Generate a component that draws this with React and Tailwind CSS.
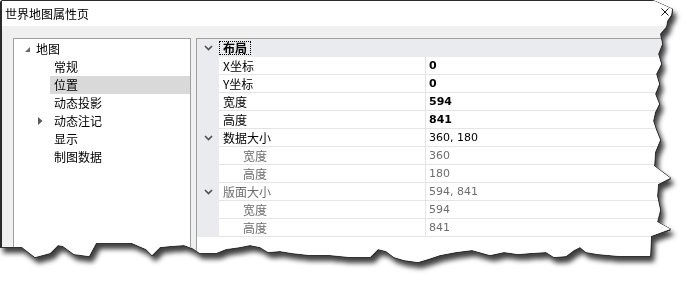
const F = { fontFamily: '"Noto Sans CJK SC", "Noto Sans", sans-serif' };

function Chevron() {
  return (
    <svg width="9" height="6" viewBox="0 0 9 6" className="block">
      <path d="M1 1 L4.5 4.5 L8 1" fill="none" stroke="#505050" strokeWidth="1.6" />
    </svg>
  );
}

function TreeRow({ label, selected, arrow }) {
  return (
    <div className="flex h-[18px]">
      <div className="w-[36px] flex items-center justify-end pr-[7px]">
        {arrow && (
          <svg width="5" height="8" viewBox="0 0 5 8" className="block">
            <path d="M0 0 L4.5 4 L0 8 Z" fill="#5a5a5a" />
          </svg>
        )}
      </div>
      <div className={`flex-1 flex items-center pl-[4px] ${selected ? 'bg-[#d9d9d9]' : ''}`}>
        <span className="text-[12px] leading-none text-black">{label}</span>
      </div>
    </div>
  );
}

function GridRow({ label, value, indent, bold, gray, grayLabel, chevron }) {
  return (
    <div className="flex h-[18px]">
      <div className="w-[22px] shrink-0 bg-[#e9ebef] flex items-center justify-center">
        {chevron && <Chevron />}
      </div>
      <div
        className={`w-[207px] shrink-0 border-b border-r border-[#e4e4e4] flex items-center ${indent ? 'pl-[24px]' : 'pl-[4px]'}`}
      >
        <span className={`text-[12px] leading-none ${grayLabel ? 'text-[#6d6d6d]' : 'text-black'}`}>{label}</span>
      </div>
      <div className="flex-1 border-b border-[#e4e4e4] flex items-center pl-[3px]">
        <span
          className={`text-[11px] leading-none ${bold ? 'font-bold' : ''} ${gray ? 'text-[#6d6d6d]' : 'text-black'}`}
          style={{ fontFamily: '"DejaVu Sans", Verdana, sans-serif' }}
        >
          {value}
        </span>
      </div>
    </div>
  );
}

export default function App() {
  return (
    <div className="w-[697px] h-[285px] bg-white overflow-hidden" style={F}>
      <div className="[filter:drop-shadow(1px_0_0_#333)_drop-shadow(0_1px_0_#333)_drop-shadow(3px_5px_2.5px_rgba(0,0,0,0.75))]">
        <div className="w-[690px] h-[272px] bg-[#f0f0f0] border-l-2 border-t border-[#2b2b2b] rounded-tl-[3px] flex flex-col [clip-path:polygon(0_0,652px_0,672px_9px,671px_15px,667px_21px,666px_27px,660px_34px,662px_44px,658px_54px,661px_64px,656px_74px,659px_84px,655px_94px,659px_104px,655px_112px,653px_121px,656px_130px,660px_140px,655px_152px,654px_166px,670px_178px,658px_184px,657px_196px,660px_210px,657px_222px,670px_229px,651px_236px,650px_256px,620px_256px,598px_254px,586px_252px,580px_247px,574px_250px,566px_256px,554px_257px,546px_252px,530px_253px,518px_254px,504px_252px,490px_255px,472px_250px,456px_252px,440px_255px,428px_259px,418px_262px,404px_260px,394px_257px,386px_251px,378px_249px,370px_257px,350px_257px,330px_255px,310px_255px,292px_253px,280px_251px,268px_252px,260px_247px,250px_245px,240px_247px,226px_249px,216px_253px,200px_253px,192px_248px,184px_245px,170px_246px,160px_247px,152px_255px,146px_249px,132px_243px,110px_243px,96px_243px,89px_256px,74px_254px,63px_246px,58px_245px,50px_253px,35px_257px,22px_247px,8px_247px,0_247px)]">
          <div className="h-[25px] shrink-0 bg-white flex items-center justify-between pl-[3px] pr-[21px]">
            <span className="text-[12px] leading-none text-black">世界地图属性页</span>
            <svg width="8" height="8" viewBox="0 0 8 8" className="block -mt-[3px]">
              <path d="M0.5 0.5 L7.5 7.5 M7.5 0.5 L0.5 7.5" stroke="#111" strokeWidth="1" />
            </svg>
          </div>
          <div className="flex pt-[12px] pl-[11px] gap-[5px] flex-1">
            <div className="w-[178px] h-[230px] shrink-0 bg-white border border-[#a0a0a0] pt-[1px]">
              <div className="flex h-[18px] items-center">
                <div className="w-[22px] flex justify-end pr-[6px]">
                  <svg width="5" height="5" viewBox="0 0 5 5" className="block">
                    <path d="M5 0 L5 5 L0 5 Z" fill="#6a6a6a" />
                  </svg>
                </div>
                <span className="text-[12px] leading-none text-black">地图</span>
              </div>
              <TreeRow label="常规" />
              <TreeRow label="位置" selected />
              <TreeRow label="动态投影" />
              <TreeRow label="动态注记" arrow />
              <TreeRow label="显示" />
              <TreeRow label="制图数据" />
            </div>
            <div className="flex-1 h-[230px] bg-white border-l border-t border-[#a0a0a0]">
              <div className="flex h-[18px] bg-[#e9ebef] items-center">
                <div className="w-[22px] shrink-0 flex items-center justify-center">
                  <Chevron />
                </div>
                <span className="h-[14px] px-[3px] border border-dotted border-black flex items-center text-[12px] leading-none font-bold text-black">
                  布局
                </span>
              </div>
              <GridRow label="X坐标" value="0" bold />
              <GridRow label="Y坐标" value="0" bold />
              <GridRow label="宽度" value="594" bold />
              <GridRow label="高度" value="841" bold />
              <GridRow label="数据大小" value="360, 180" chevron />
              <GridRow label="宽度" value="360" indent gray grayLabel />
              <GridRow label="高度" value="180" indent gray grayLabel />
              <GridRow label="版面大小" value="594, 841" chevron gray grayLabel />
              <GridRow label="宽度" value="594" indent gray grayLabel />
              <GridRow label="高度" value="841" indent gray grayLabel />
            </div>
          </div>
        </div>
      </div>
    </div>
  );
}
